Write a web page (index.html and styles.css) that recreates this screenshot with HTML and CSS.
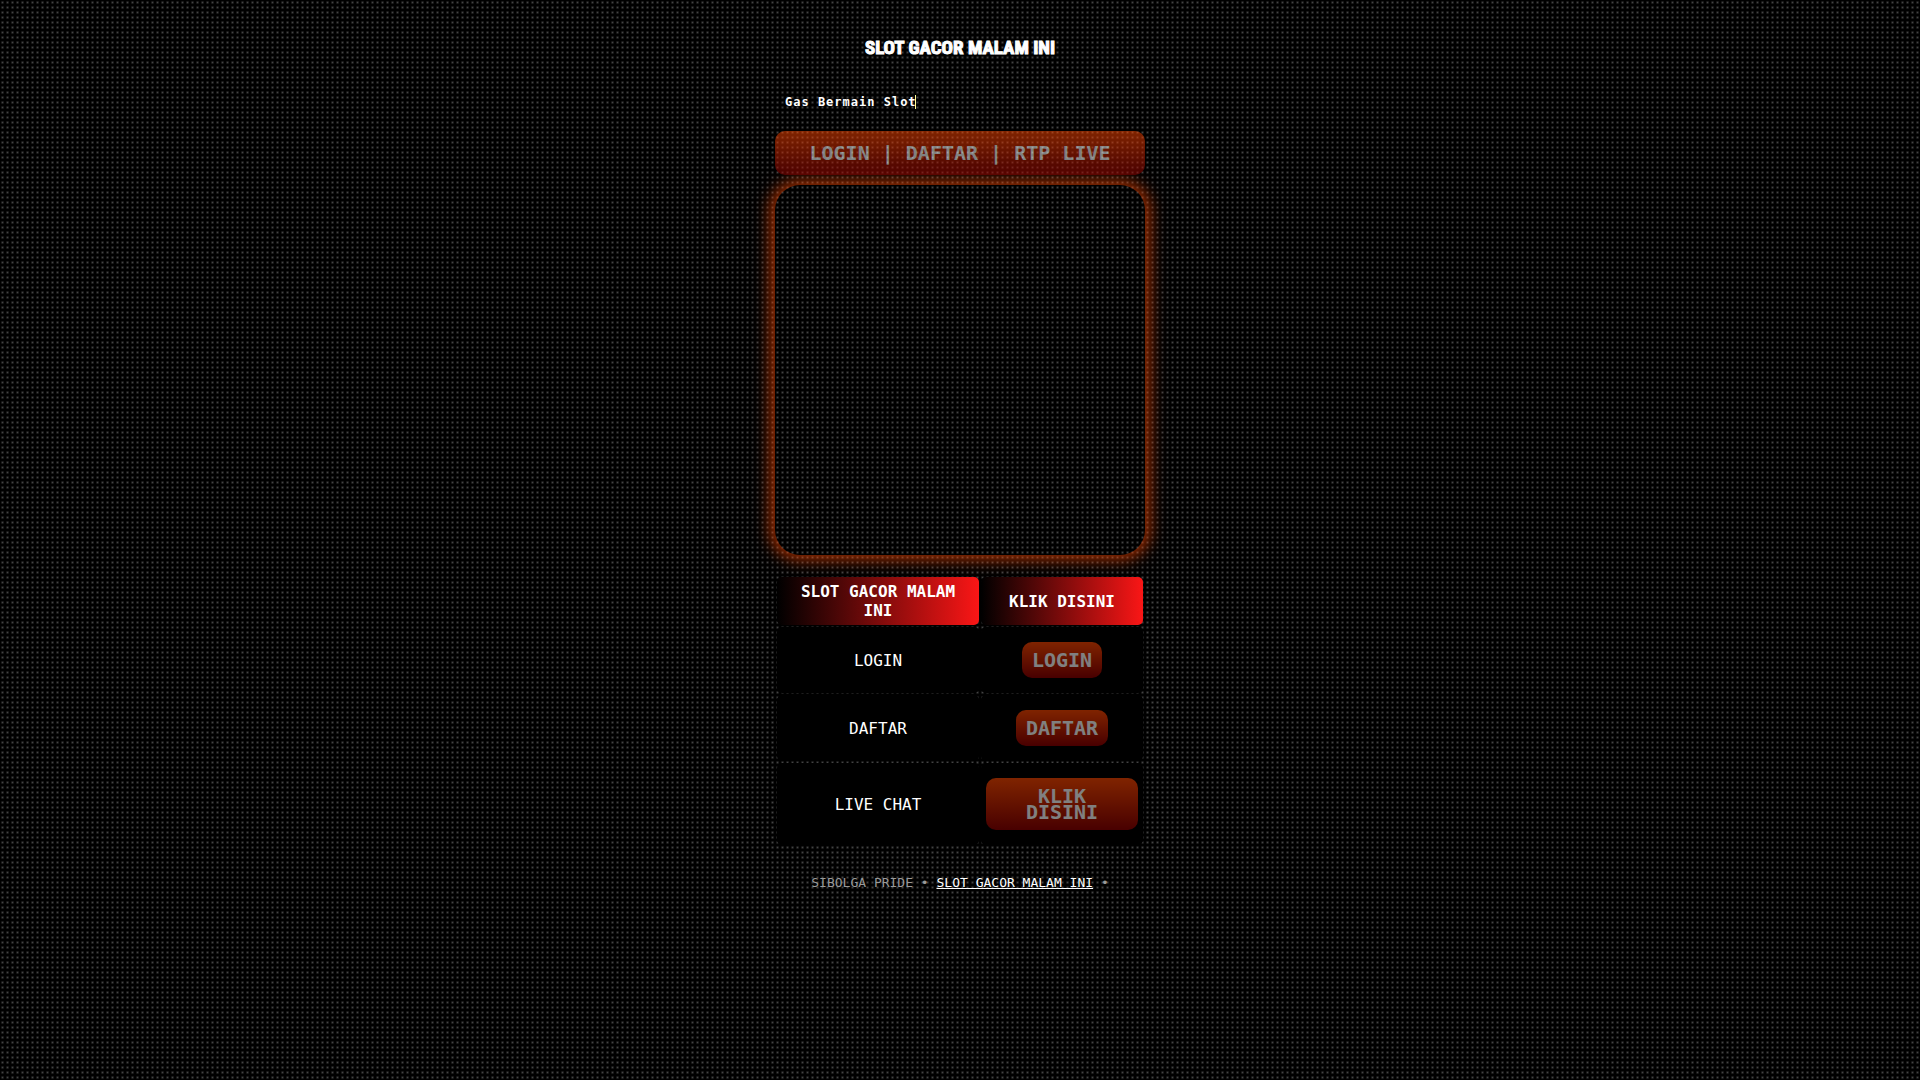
FILE: index.html
```html
<!DOCTYPE html>
<html lang="id">
<head>
    <meta charset="UTF-8">
    <meta name="viewport" content="width=device-width, initial-scale=1.0">
    <title>SLOT GACOR MALAM INI</title>
    <link rel="stylesheet" href="styles.css">
</head>
<body>
    <main class="container">
        <h1 class="logo">SLOT GACOR MALAM INI</h1>

        <p class="typing">Gas Bermain Slot</p>

        <a class="btn btn-wide" href="#">LOGIN | DAFTAR | RTP LIVE</a>

        <div class="banner"></div>

        <table class="links">
            <thead>
                <tr>
                    <th>SLOT GACOR MALAM INI</th>
                    <th>KLIK DISINI</th>
                </tr>
            </thead>
            <tbody>
                <tr>
                    <td>LOGIN</td>
                    <td><a class="btn" href="#">LOGIN</a></td>
                </tr>
                <tr>
                    <td>DAFTAR</td>
                    <td><a class="btn" href="#">DAFTAR</a></td>
                </tr>
                <tr>
                    <td>LIVE CHAT</td>
                    <td><a class="btn" href="#">KLIK DISINI</a></td>
                </tr>
            </tbody>
        </table>

        <footer class="footer">SIBOLGA PRIDE • <a href="#">SLOT GACOR MALAM INI</a> •</footer>
    </main>
</body>
</html>
```

FILE: styles.css
```css
* {
    box-sizing: border-box;
}

body {
    margin: 0;
    min-height: 100vh;
    color: #fff;
    font-family: 'DejaVu Sans Mono', monospace;
    font-size: 16px;
    /* dotted wallpaper */
    background-color: #000;
    background-image: radial-gradient(circle at 50% 50%, #444 0, #1e1e1e 1px, #000 2px);
    background-size: 5px 5px;
}

.container {
    width: 100%;
    max-width: 370px;
    margin: 0 auto;
    padding-top: 30px;
}

.logo {
    margin: 0 0 30px;
    font-family: Impact, 'Roboto Condensed', 'Open Sans Condensed', 'Noto Sans Condensed', 'Liberation Sans', sans-serif;
    font-size: 19px;
    line-height: 35px;
    text-align: center;
    white-space: nowrap;
    -webkit-text-stroke: 1px #fff;
}

.typing {
    width: 131px;
    margin: 0 0 22px 10px;
    overflow: hidden;
    border-right: 1px solid #ffff99;
    font-size: 12px;
    font-weight: bold;
    line-height: 14px;
    letter-spacing: 1px;
    white-space: nowrap;
}

.btn {
    display: inline-block;
    padding: 10px;
    border-radius: 10px;
    background: linear-gradient(to bottom, #ff4800, #900000);
    color: #fff;
    font-size: 20px;
    font-weight: bold;
    line-height: 16px;
    text-align: center;
    text-decoration: none;
    vertical-align: middle;
    opacity: 0.5;
}

.btn-wide {
    display: block;
    padding: 14px 10px;
}

.banner {
    aspect-ratio: 1;
    margin: 10px 0 20px;
    border-radius: 25px;
    box-shadow: 0 0 15px 5px rgba(255, 72, 0, 0.6);
}

.links {
    width: 100%;
    border-spacing: 2px;
    text-align: center;
}

.links th,
.links td {
    border-radius: 5px;
}

.links th {
    padding: 5px 20px;
    background: linear-gradient(to right, #000, #fa1616);
    line-height: 19px;
}

.links td {
    padding: 15px 5px;
    background: #000;
}

.links th:first-child {
    width: 202px;
}

.footer {
    margin-top: 27px;
    color: #999;
    font-size: 13px;
    line-height: 18px;
    text-align: center;
}

.footer a {
    color: #fff;
}
```
